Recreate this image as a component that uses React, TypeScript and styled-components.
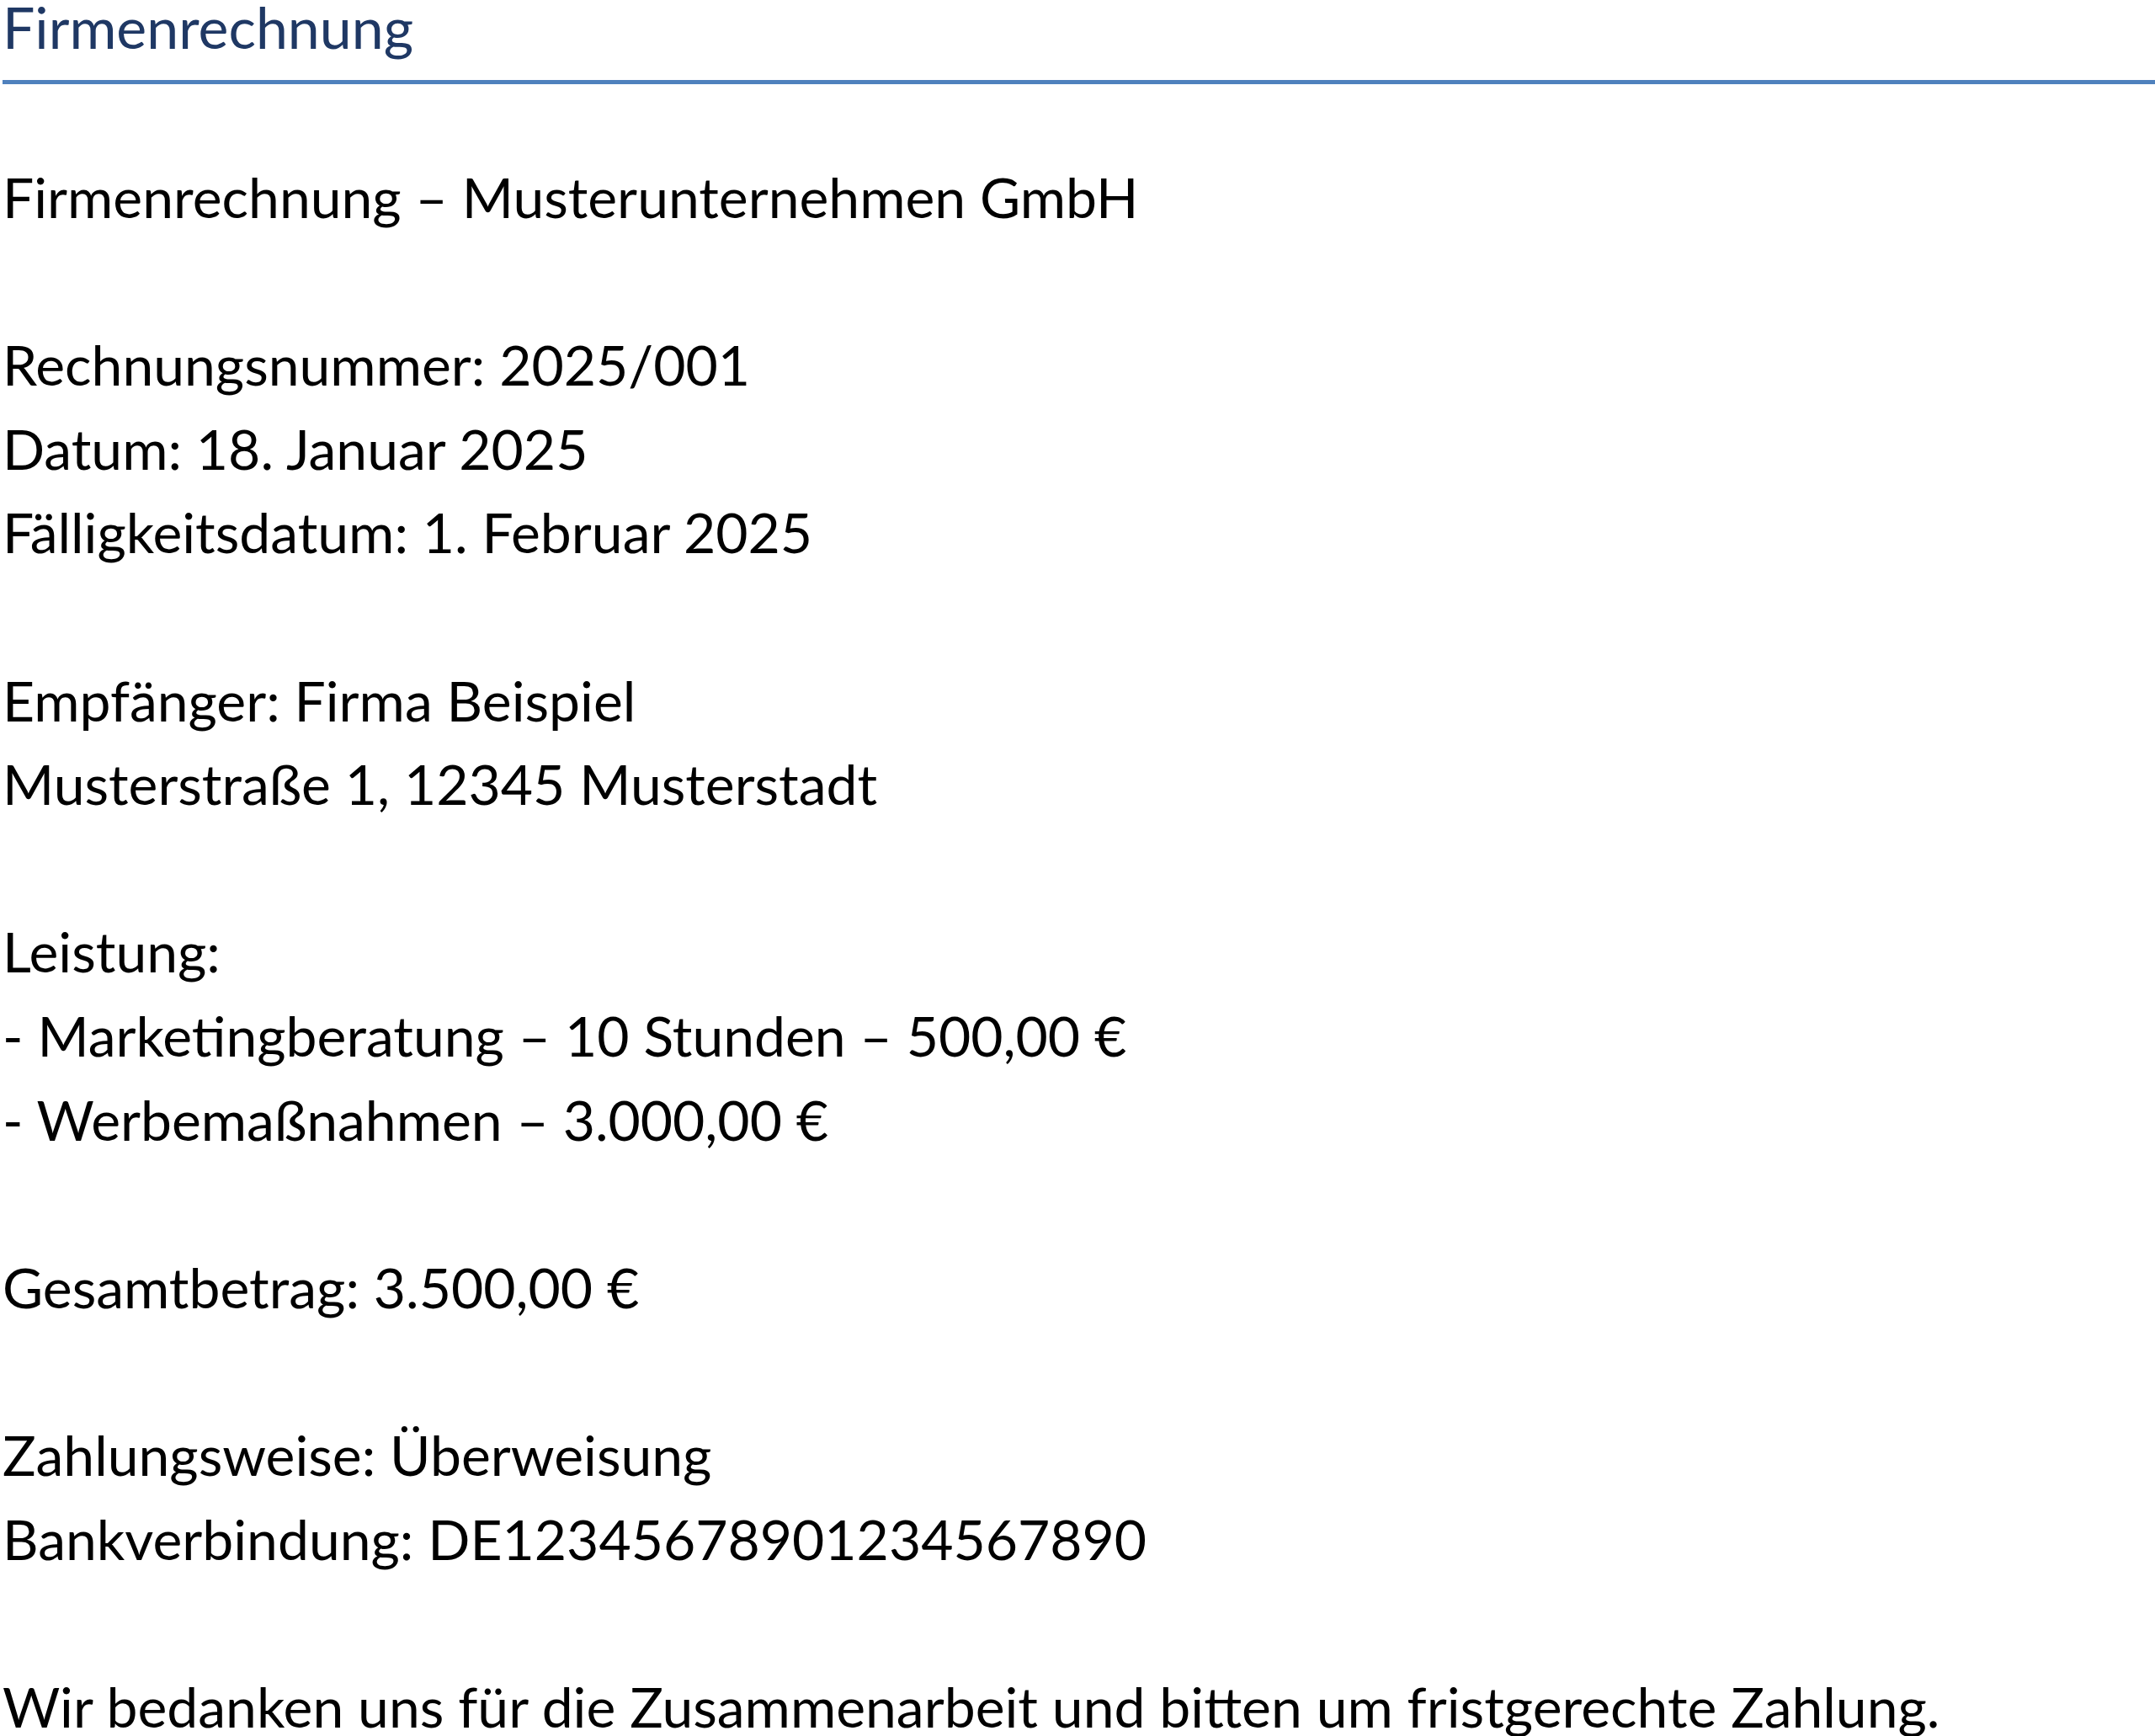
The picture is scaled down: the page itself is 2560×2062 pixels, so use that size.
import React from "react";
import styled, { createGlobalStyle } from "styled-components";

const Global = createGlobalStyle`
  html, body { margin: 0; padding: 0; background: #fff; }
  body { font-family: Lato, "Open Sans", sans-serif; }
`;

const Page = styled.div`
  padding: 0 0 0 3px;
  width: 2557px;
`;

const Title = styled.h1`
  margin: 0;
  font-weight: 400;
  font-size: 68px;
  line-height: 64px;
  color: #1f3864;
  padding-bottom: 31px;
  border-bottom: 5px solid #4f81bd;
`;

const Body = styled.div`
  padding-top: 84px;
  font-size: 66px;
  line-height: 99.6px;
  color: #000;
`;

const Line = styled.div`
  white-space: pre;
  min-height: 99.6px;
`;

const lines = [
  "Firmenrechnung – Musterunternehmen GmbH",
  "",
  "Rechnungsnummer: 2025/001",
  "Datum: 18. Januar 2025",
  "Fälligkeitsdatum: 1. Februar 2025",
  "",
  "Empfänger: Firma Beispiel",
  "Musterstraße 1, 12345 Musterstadt",
  "",
  "Leistung:",
  "- Marketingberatung – 10 Stunden – 500,00 €",
  "- Werbemaßnahmen – 3.000,00 €",
  "",
  "Gesamtbetrag: 3.500,00 €",
  "",
  "Zahlungsweise: Überweisung",
  "Bankverbindung: DE12345678901234567890",
  "",
  "Wir bedanken uns für die Zusammenarbeit und bitten um fristgerechte Zahlung.",
];

export default function App() {
  return (
    <Page>
      <Global />
      <Title>Firmenrechnung</Title>
      <Body>
        {lines.map((l, i) => (
          <Line key={i}>{l}</Line>
        ))}
      </Body>
    </Page>
  );
}
